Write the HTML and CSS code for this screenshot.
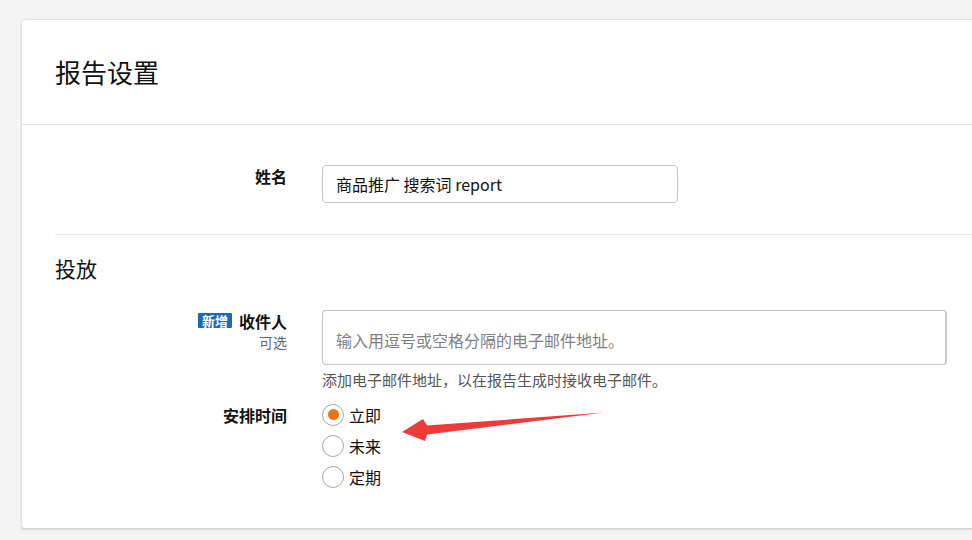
FILE: index.html
```html
<!DOCTYPE html>
<html lang="zh-CN">
<head>
    <meta charset="UTF-8">
    <title>报告设置</title>
    <link rel="stylesheet" href="styles.css">
</head>
<body>
    <div class="card">
        <div class="card-header">
            <h1>报告设置</h1>
        </div>

        <div class="card-body">
            <div class="form-row name-row">
                <div class="form-label">
                    <label for="reportName">姓名</label>
                </div>
                <div class="form-control">
                    <input type="text" id="reportName" class="text-input" value="商品推广 搜索词 report">
                </div>
            </div>

            <div class="divider"></div>

            <h2 class="section-title">投放</h2>

            <div class="form-row recipients-row">
                <div class="form-label">
                    <div class="label-line">
                        <span class="badge">新增</span>
                        <label for="recipients">收件人</label>
                    </div>
                    <div class="optional">可选</div>
                </div>
                <div class="form-control">
                    <textarea id="recipients" class="text-area" placeholder="输入用逗号或空格分隔的电子邮件地址。"></textarea>
                    <div class="hint">添加电子邮件地址，以在报告生成时接收电子邮件。</div>
                </div>
            </div>

            <div class="form-row schedule-row">
                <div class="form-label">
                    <label>安排时间</label>
                </div>
                <div class="form-control radio-group">
                    <label class="radio-item">
                        <input type="radio" name="schedule" value="now" checked>
                        <span>立即</span>
                    </label>
                    <label class="radio-item">
                        <input type="radio" name="schedule" value="future">
                        <span>未来</span>
                    </label>
                    <label class="radio-item">
                        <input type="radio" name="schedule" value="recurring">
                        <span>定期</span>
                    </label>
                </div>
            </div>
        </div>
    </div>

    <!-- annotation arrow drawn over the screenshot -->
    <svg class="arrow" width="225" height="45" viewBox="0 0 225 45">
        <polygon points="12,27 33,14 37,20.5 214,7.5 37,29.5 35,36" fill="#ef3a3a"/>
    </svg>
</body>
</html>
```

FILE: styles.css
```css
body {
    margin: 0;
    padding: 19px 0 0 21px;
    background-color: #f4f4f4;
    font-family: "Noto Sans CJK SC", "Noto Sans", sans-serif;
    color: #111;
    overflow: hidden;
    position: relative;
    height: 540px;
    box-sizing: border-box;
}
.card {
    background: white;
    border: 1px solid #e3e3e3;
    border-right: none;
    border-bottom-color: #d5d5d5;
    border-radius: 4px 0 0 4px;
    box-shadow: 0 1px 2px rgba(0,0,0,0.12);
}
.card-header {
    height: 104px;
    padding: 0 33px;
    display: flex;
    align-items: center;
    border-bottom: 1px solid #e3e3e3;
}
.card-header h1 {
    margin: 0;
    font-size: 26px;
    font-weight: normal;
    line-height: 1;
    padding-bottom: 1px;
}
.card-body {
    padding: 40px 0 36px 33px;
}
.form-row {
    display: grid;
    grid-template-columns: 232px 1fr;
    column-gap: 35px;
    align-items: start;
}
.form-label {
    text-align: right;
    font-size: 16px;
    font-weight: bold;
    line-height: 22px;
}
.form-label label {
    font-weight: bold;
}
.label-line {
    display: flex;
    justify-content: flex-end;
    align-items: center;
    gap: 7px;
}
.badge {
    background: #1b6ab3;
    color: white;
    font-size: 13px;
    font-weight: bold;
    line-height: 15px;
    height: 15px;
    padding: 0 4px;
    border-radius: 1px;
    position: relative;
    top: -1px;
}
.optional {
    font-size: 14px;
    font-weight: normal;
    color: #666;
    line-height: 20px;
}
.text-input {
    width: 356px;
    height: 38px;
    box-sizing: border-box;
    padding: 0 13px;
    border: 1px solid #c4c4c4;
    border-radius: 4px;
    font-family: inherit;
    font-size: 16px;
    color: #111;
    outline: none;
}
.divider {
    height: 1px;
    background: #e6e6e6;
    margin-top: 31px;
}
.section-title {
    margin: 19px 0 0;
    font-size: 21px;
    font-weight: normal;
    line-height: 28px;
}
.recipients-row {
    margin-top: 28px;
}
.text-area {
    display: block;
    width: 625px;
    height: 55px;
    box-sizing: border-box;
    padding: 19px 13px 0;
    border: 1px solid #c4c4c4;
    border-right: 2px solid #c9c9c9;
    border-radius: 4px;
    font-family: inherit;
    font-size: 16px;
    line-height: 20px;
    resize: none;
    outline: none;
}
.text-area::placeholder {
    color: #808080;
}
.hint {
    margin-top: 5px;
    font-size: 15px;
    line-height: 20px;
    color: #555;
}
.schedule-row {
    margin-top: 9px;
}
.schedule-row .form-label {
    padding-top: 5px;
}
.radio-group {
    display: flex;
    flex-direction: column;
}
.radio-item {
    display: flex;
    align-items: center;
    gap: 5px;
    height: 31px;
    font-size: 16px;
    cursor: pointer;
}
.radio-item input {
    appearance: none;
    -webkit-appearance: none;
    margin: 0;
    width: 22px;
    height: 22px;
    border: 1px solid #a8a8a8;
    border-radius: 50%;
    background: white;
    display: flex;
    align-items: center;
    justify-content: center;
    box-sizing: border-box;
}
.radio-item input:checked::after {
    content: "";
    width: 11px;
    height: 11px;
    border-radius: 50%;
    background: #e47911;
}
.arrow {
    position: absolute;
    left: 390px;
    top: 405px;
}
```
